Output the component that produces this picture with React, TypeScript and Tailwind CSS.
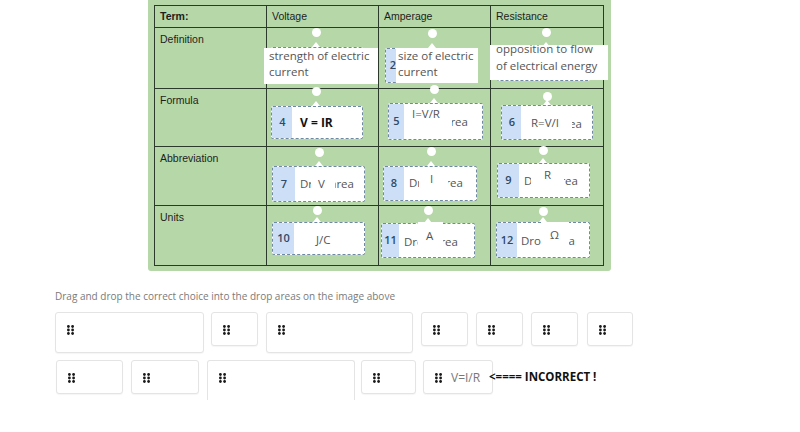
import React from "react";

type Ov = { x: number; y: number; w: number; h: number; lines: string[]; px: number; py: number; bold?: boolean; lh?: number };
type Zone = {
  x: number; y: number; w: number; h: number;
  num?: string; stub: number;
  base?: { x: number; cy: number; text: string };
  ovs: Ov[];
  knob: [number, number];
};

const PX = 148;

const zones: Zone[] = [
  { x: 271, y: 47, w: 92, h: 34, num: "1", stub: 21, ovs: [{ x: 264, y: 48, w: 114, h: 36, lines: ["strength of electric", "current"], px: 5, py: 0, lh: 16 }], knob: [316, 32] },
  { x: 385, y: 48, w: 93, h: 35, num: "2", stub: 14, ovs: [{ x: 396, y: 48, w: 82, h: 35, lines: ["size of electric", "current"], px: 2, py: 0, lh: 16 }], knob: [432, 33] },
  { x: 497, y: 47, w: 93, h: 34, num: "3", stub: 21, ovs: [{ x: 490, y: 45, w: 118, h: 35, lines: ["opposition to flow", "of electrical energy"], px: 6, py: -5, lh: 17 }], knob: [546, 32] },
  { x: 271, y: 106, w: 92, h: 33, num: "4", stub: 21, ovs: [{ x: 292, y: 107, w: 70, h: 31, lines: ["V = IR"], px: 8, py: 7, bold: true, lh: 17 }], knob: [316, 91] },
  { x: 388, y: 103, w: 95, h: 37, num: "5", stub: 15, base: { x: 414, cy: 122, text: "Drop area" }, ovs: [{ x: 407, y: 104, w: 45, h: 35, lines: ["I=V/R"], px: 5, py: 1, lh: 17 }], knob: [434, 89] },
  { x: 501, y: 105, w: 92, h: 35, num: "6", stub: 20, base: { x: 528, cy: 124, text: "Drop area" }, ovs: [{ x: 521, y: 106, w: 51, h: 33, lines: ["R=V/I"], px: 10, py: 8, lh: 17 }], knob: [547, 96] },
  { x: 272, y: 166, w: 93, h: 36, num: "7", stub: 22, base: { x: 300, cy: 184, text: "Drop area" }, ovs: [{ x: 311, y: 167, w: 24, h: 34, lines: ["V"], px: 7, py: 8, lh: 17 }], knob: [319, 152] },
  { x: 383, y: 166, w: 94, h: 35, num: "8", stub: 20, base: { x: 409, cy: 183, text: "Drop area" }, ovs: [{ x: 419, y: 167, w: 29, h: 33, lines: ["I"], px: 11, py: 3, lh: 17 }], knob: [431, 151] },
  { x: 497, y: 163, w: 93, h: 35, num: "9", stub: 21, base: { x: 524, cy: 181, text: "Drop area" }, ovs: [{ x: 531, y: 164, w: 33, h: 30, lines: ["R"], px: 13, py: 2, lh: 17 }], knob: [543, 150] },
  { x: 272, y: 222, w: 93, h: 33, num: "10", stub: 21, ovs: [{ x: 296, y: 223, w: 68, h: 31, lines: ["J/C"], px: 20, py: 8, lh: 17 }], knob: [317, 210] },
  { x: 381, y: 223, w: 94, h: 35, num: "11", stub: 17, base: { x: 404, cy: 242, text: "Drop area" }, ovs: [{ x: 418, y: 222, w: 25, h: 34, lines: ["A"], px: 8, py: 5, lh: 17 }], knob: [428, 210] },
  { x: 496, y: 222, w: 94, h: 36, num: "12", stub: 20, base: { x: 521, cy: 241, text: "Drop area" }, ovs: [{ x: 541, y: 222, w: 28, h: 33, lines: ["Ω"], px: 9, py: 4, lh: 17 }], knob: [543, 211] },
];

function Grip() {
  return (
    <svg width="7" height="10" viewBox="0 0 7 10" className="shrink-0">
      {[0, 1, 2].map((r) =>
        [0, 1].map((c) => <circle key={`${r}-${c}`} cx={1.4 + c * 4.2} cy={1.5 + r * 3.5} r={1.4} fill="#1a1a1a" />)
      )}
    </svg>
  );
}

function Drag({ cls, label }: { cls: string; label?: string }) {
  return (
    <div className={`${cls} shrink-0 bg-white border border-[#e4e4e4] rounded-[3px] shadow-[0_1px_1px_rgba(0,0,0,0.04)] flex items-start pt-[12px] pl-[11px] gap-[9px]`}>
      <Grip />
      {label && <span className="text-[12px] leading-[11px] text-[#777] -mt-[1px]">{label}</span>}
    </div>
  );
}

const cellLabel = "pl-[5px] pt-[5px] text-[10.5px] leading-[13px] text-[#1e1e1e] border-r border-b border-[#2c3a2c]";

export default function App() {
  return (
    <div className="w-[800px] h-[432px] bg-white overflow-hidden" style={{ fontFamily: '"Open Sans", sans-serif' }}>
      <div className="relative ml-[148px] w-[463px] h-[271px] bg-[#b6d7a8] rounded-b-[3px] pt-[5px] pl-[6px]">
        <div
          className="grid grid-cols-[112px_112px_112px_113px] grid-rows-[22px_61px_58px_59px_60px] w-[450px] border-l border-t border-[#2c3a2c]"
          style={{ fontFamily: '"Liberation Sans", Arial, sans-serif' }}
        >
          <div className="pl-[5px] flex items-center text-[10.5px] font-bold text-[#1e1e1e] border-r border-b border-[#2c3a2c]">Term:</div>
          <div className="pl-[5px] flex items-center text-[10.5px] text-[#1e1e1e] border-r border-b border-[#2c3a2c]">Voltage</div>
          <div className="pl-[5px] flex items-center text-[10.5px] text-[#1e1e1e] border-r border-b border-[#2c3a2c]">Amperage</div>
          <div className="pl-[5px] flex items-center text-[10.5px] text-[#1e1e1e] border-r border-b border-[#2c3a2c]">Resistance</div>
          {["Definition", "Formula", "Abbreviation", "Units"].map((r) => (
            <React.Fragment key={r}>
              <div className={cellLabel}>{r}</div>
              <div className="border-r border-b border-[#2c3a2c]" />
              <div className="border-r border-b border-[#2c3a2c]" />
              <div className="border-r border-b border-[#2c3a2c]" />
            </React.Fragment>
          ))}
        </div>

        {zones.map((z, i) => (
          <React.Fragment key={i}>
            <div className="absolute w-[9px] h-[9px] rounded-full bg-white" style={{ left: z.knob[0] - PX - 4.5, top: z.knob[1] - 4.5 }} />
            <div
              className="absolute w-0 h-0 border-l-[4px] border-r-[4px] border-b-[5px] border-l-transparent border-r-transparent border-b-white"
              style={{ left: z.knob[0] - PX - 4, top: z.y - 5 }}
            />
            <div
              className="absolute bg-white border border-dashed border-[#6e8aa3] rounded-[2px] overflow-hidden flex"
              style={{ left: z.x - PX, top: z.y, width: z.w, height: z.h }}
            >
              <div className="h-full bg-[#cddff6] flex items-center justify-center text-[11px] font-semibold text-[#2e4a66] shrink-0" style={{ width: z.stub }}>
                {z.num}
              </div>
            </div>
            {z.base && (
              <span
                className="absolute whitespace-nowrap text-[11.5px] leading-[16px] text-[#555]"
                style={{ left: z.base.x - PX, top: z.base.cy - 8 }}
              >
                {z.base.text}
              </span>
            )}
            {z.ovs.map((o, j) => (
              <div
                key={j}
                className={`absolute bg-white overflow-hidden whitespace-nowrap text-[11.5px] ${o.bold ? "font-bold text-[#111] text-[12px]" : "text-[#555]"}`}
                style={{ left: o.x - PX, top: o.y, width: o.w, height: o.h, paddingLeft: o.px, lineHeight: `${o.lh}px` }}
              >
                <div style={{ marginTop: o.py }}>
                  {o.lines.map((l) => (
                    <div key={l}>{l}</div>
                  ))}
                </div>
              </div>
            ))}
          </React.Fragment>
        ))}
      </div>

      <div className="ml-[55px] mt-[18px] text-[10px] leading-[14px] text-[#7a7a7a]">
        Drag and drop the correct choice into the drop areas on the image above
      </div>

      <div className="flex items-start mt-[9px]">
        <Drag cls="w-[149px] h-[41px] ml-[55px]" />
        <Drag cls="w-[47px] h-[34px] ml-[7px]" />
        <Drag cls="w-[147px] h-[41px] ml-[8px]" />
        <Drag cls="w-[47px] h-[34px] ml-[8px]" />
        <Drag cls="w-[47px] h-[34px] ml-[8px]" />
        <Drag cls="w-[47px] h-[34px] ml-[8px]" />
        <Drag cls="w-[46px] h-[34px] ml-[9px]" />
      </div>

      <div className="flex items-start mt-[7px]">
        <Drag cls="w-[67px] h-[34px] ml-[56px]" />
        <Drag cls="w-[68px] h-[34px] ml-[8px]" />
        <Drag cls="w-[148px] h-[40px] ml-[8px] border-b-0 rounded-b-none shadow-none" />
        <Drag cls="w-[55px] h-[34px] ml-[6px]" />
        <Drag cls="w-[70px] h-[34px] ml-[7px]" label="V=I/R" />
        <span className="-ml-[4px] mt-[10px] text-[11.5px] font-bold text-[#111] leading-[14px] whitespace-nowrap">{"<==== INCORRECT !"}</span>
      </div>
    </div>
  );
}
